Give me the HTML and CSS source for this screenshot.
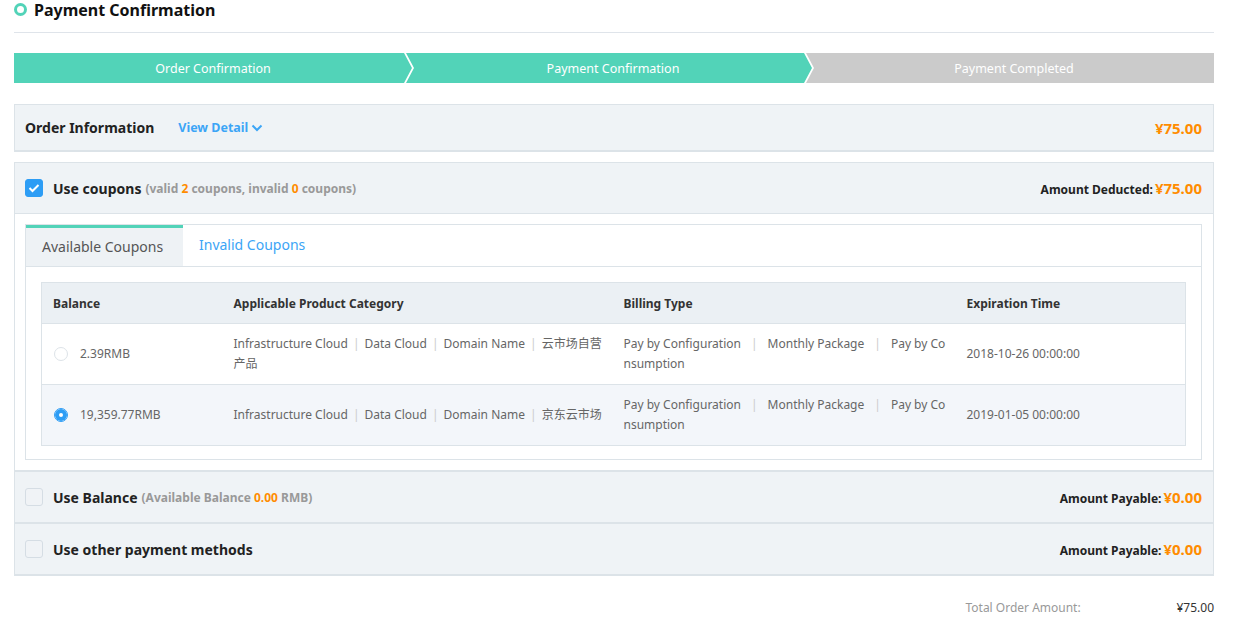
FILE: index.html
```html
<!DOCTYPE html>
<html>
<head>
<meta charset="utf-8">
<link rel="stylesheet" href="styles.css">
</head>
<body>
<div class="page">
  <div class="title">
    <span class="ring"></span>
    <h1>Payment Confirmation</h1>
  </div>

  <div class="steps">
    <div class="step step-first done">Order Confirmation</div>
    <div class="step step-mid done">Payment Confirmation</div>
    <div class="step step-last">Payment Completed</div>
  </div>

  <div class="panel order">
    <div class="row-head">
      <div class="left">
        <span class="head-title">Order Information</span>
        <a class="detail">View Detail
          <svg width="12" height="8" viewBox="0 0 12 8"><path d="M1.5 1.5 L6 6 L10.5 1.5" fill="none" stroke="#3ca5f6" stroke-width="2"/></svg>
        </a>
      </div>
      <span class="amount">¥75.00</span>
    </div>
  </div>

  <div class="group">
    <div class="panel coupons">
      <div class="row-head">
        <div class="left">
          <span class="check on"><svg width="12" height="10" viewBox="0 0 12 10"><path d="M1.5 5 L4.5 8 L10.5 2" fill="none" stroke="#fff" stroke-width="2"/></svg></span>
          <span class="head-title">Use coupons</span>
          <span class="note">(valid <em>2</em> coupons, invalid <em>0</em> coupons)</span>
        </div>
        <div class="right"><span class="label">Amount Deducted:</span><span class="amount">¥75.00</span></div>
      </div>
      <div class="coupon-body">
        <div class="tabs">
          <div class="tab-bar">
            <div class="tab active">Available Coupons</div>
            <div class="tab">Invalid Coupons</div>
          </div>
          <div class="tab-content">
            <table class="grid">
              <colgroup>
                <col class="c1"><col class="c2"><col class="c3"><col class="c4">
              </colgroup>
              <thead>
                <tr><th>Balance</th><th>Applicable Product Category</th><th>Billing Type</th><th>Expiration Time</th></tr>
              </thead>
              <tbody>
                <tr>
                  <td><span class="bal"><span class="radio"></span>2.39RMB</span></td>
                  <td class="cat">Infrastructure Cloud<i>|</i>Data Cloud<i>|</i>Domain Name<i>|</i>云市场自营产品</td>
                  <td class="billing">Pay by Configuration<b>|</b>Monthly Package<b>|</b>Pay by Consumption</td>
                  <td>2018-10-26 00:00:00</td>
                </tr>
                <tr class="alt">
                  <td><span class="bal"><span class="radio on"></span>19,359.77RMB</span></td>
                  <td class="cat">Infrastructure Cloud<i>|</i>Data Cloud<i>|</i>Domain Name<i>|</i>京东云市场</td>
                  <td class="billing">Pay by Configuration<b>|</b>Monthly Package<b>|</b>Pay by Consumption</td>
                  <td>2019-01-05 00:00:00</td>
                </tr>
              </tbody>
            </table>
          </div>
        </div>
      </div>
    </div>

    <div class="panel plain">
      <div class="row-head">
        <div class="left">
          <span class="check"></span>
          <span class="head-title">Use Balance</span>
          <span class="note">(Available Balance <em>0.00</em> RMB)</span>
        </div>
        <div class="right"><span class="label">Amount Payable:</span><span class="amount">¥0.00</span></div>
      </div>
    </div>

    <div class="panel plain">
      <div class="row-head">
        <div class="left">
          <span class="check"></span>
          <span class="head-title">Use other payment methods</span>
        </div>
        <div class="right"><span class="label">Amount Payable:</span><span class="amount">¥0.00</span></div>
      </div>
    </div>
  </div>

  <div class="total">
    <span class="total-label">Total Order Amount:</span>
    <span class="total-value">¥75.00</span>
  </div>
</div>
</body>
</html>
```

FILE: styles.css
```css
* { box-sizing: border-box; }
body {
  margin: 0;
  background: #fff;
  font-family: "Noto Sans", "Noto Sans CJK SC", sans-serif;
  color: #333;
}
.page {
  width: 1241px;
  padding: 0 27px 0 14px;
}
.title {
  display: flex;
  align-items: center;
  height: 33px;
  padding: 1px 0 14px;
  border-bottom: 1px solid #dfe4ea;
}
.ring {
  width: 13px;
  height: 13px;
  border: 3px solid #52d3b8;
  border-radius: 50%;
  margin: 0 7px 0 0;
}
.title h1 {
  margin: 0;
  font-size: 16px;
  font-weight: 700;
  color: #111;
  line-height: 18px;
}
.steps {
  display: flex;
  margin-top: 20px;
  height: 30px;
}
.step {
  flex: 0 0 auto;
  height: 30px;
  line-height: 31px;
  text-align: center;
  color: #fff;
  font-size: 12.5px;
  background: #cbcbcb;
  white-space: nowrap;
}
.step.done { background: #52d3b8; }
.step-first {
  width: 398px;
  clip-path: polygon(0 0, calc(100% - 8px) 0, 100% 50%, calc(100% - 8px) 100%, 0 100%);
}
.step-mid {
  width: 406px;
  margin-left: -6px;
  padding-left: 8px;
  clip-path: polygon(0 0, calc(100% - 8px) 0, 100% 50%, calc(100% - 8px) 100%, 0 100%, 8px 50%);
}
.step-last {
  width: 408px;
  margin-left: -6px;
  padding-left: 8px;
  clip-path: polygon(0 0, 100% 0, 100% 100%, 0 100%, 8px 50%);
}
.panel {
  background: #eff3f6;
  border: 1px solid #dce3e8;
  border-bottom-width: 2px;
}
.order { margin-top: 21px; }
.row-head {
  display: flex;
  align-items: center;
  justify-content: space-between;
  padding: 0 11px 0 10px;
}
.order .row-head { height: 45px; }
.group { margin-top: 10px; }
.coupons .row-head { height: 50px; }
.plain { border-top: 0; }
.plain .row-head { height: 50px; }
.left { display: flex; align-items: center; }
.right { display: flex; align-items: baseline; }
.head-title {
  font-size: 14px;
  font-weight: 700;
  color: #222;
}
.detail {
  margin-left: 24px;
  font-size: 12.5px;
  font-weight: 700;
  color: #3ca5f6;
  display: flex;
  align-items: center;
  gap: 3px;
}
.amount {
  font-size: 15px;
  font-weight: 700;
  color: #ff8c00;
}
.label {
  font-size: 12px;
  font-weight: 700;
  color: #222;
  margin-right: 2px;
}
.check {
  width: 18px;
  height: 18px;
  border-radius: 3px;
  background: #f0f3f6;
  border: 1px solid #d5dde4;
  margin-right: 10px;
  display: flex;
  align-items: center;
  justify-content: center;
}
.check.on { background: #2d9df5; border-color: #2d9df5; }
.note {
  margin-left: 4px;
  font-size: 12px;
  font-weight: 700;
  color: #999;
}
.note em { font-style: normal; color: #ff8c00; }
.coupon-body {
  background: #fff;
  padding: 10px 11px 10px 10px;
  border-top: 1px solid #dce3e8;
}
.tabs { border: 1px solid #dce3e8; }
.tab-bar {
  display: flex;
  height: 42px;
  border-bottom: 1px solid #dce3e8;
}
.tab {
  padding: 0 16px;
  font-size: 14px;
  line-height: 40px;
  color: #3ca5f6;
  white-space: nowrap;
}
.tab.active {
  width: 157px;
  background: #eef2f5;
  color: #555;
  border-top: 3px solid #52d3b8;
  line-height: 37px;
}
.tab-content { padding: 15px 15px 13px 15px; }
.grid {
  width: 100%;
  border-collapse: collapse;
  border: 1px solid #dce3e8;
  table-layout: fixed;
  font-size: 12px;
}
.c1 { width: 181px; }
.c2 { width: 390px; }
.c3 { width: 343px; }
.grid th {
  background: #ebf0f4;
  height: 41px;
  text-align: left;
  padding: 0 11px;
  font-size: 12px;
  font-weight: 700;
  color: #333;
}
.grid td {
  height: 61px;
  padding: 0 11px;
  border-top: 1px solid #dce3e8;
  color: #666;
  line-height: 20px;
  vertical-align: middle;
}
.grid td.cat { padding-right: 3px; }
.grid tr.alt td { background: #f3f6fa; }
.grid i { font-style: normal; color: #ccc; margin: 0 5px; }
.grid .billing { word-break: break-all; padding-right: 7px; }
.grid .billing b { font-weight: 400; color: #ccc; margin: 0 10px; }
.bal { display: flex; align-items: center; }
.radio {
  width: 14px;
  height: 14px;
  border-radius: 50%;
  border: 1px solid #dde3e8;
  background: #fff;
  margin: 0 12px 0 1px;
}
.radio.on {
  border-color: #2d9df5;
  box-shadow: inset 0 0 0 4px #2d9df5;
  background: #fff;
}
.total {
  display: flex;
  justify-content: flex-end;
  margin-top: 23px;
  font-size: 12px;
}
.total-label { color: #999; width: 211px; }
.total-value { color: #333; }
```
